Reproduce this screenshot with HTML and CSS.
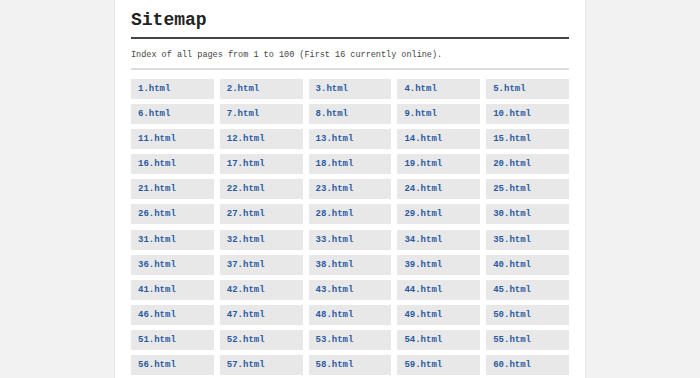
FILE: index.html
```html
<!DOCTYPE html>
<html>
<head>
    <title>Sitemap</title>
    <link rel="stylesheet" href="styles.css">
</head>
<body>
    <div class="page">
        <h1>Sitemap</h1>
        <p class="intro">Index of all pages from 1 to 100 (First 16 currently online).</p>
        <ul class="page-list" id="pageList"></ul>
    </div>

    <script>
        const pageList = document.getElementById("pageList");

        for (let i = 1; i <= 100; i++) {
            const item = document.createElement("li");
            item.innerHTML = `<a href="${i}.html">${i}.html</a>`;
            pageList.appendChild(item);
        }
    </script>
</body>
</html>
```

FILE: styles.css
```css
body {
    font-family: "Liberation Mono", "Courier New", monospace;
    margin: 0;
    padding: 0;
    background-color: #f2f2f2;
    color: #333;
}

.page {
    width: 438px;
    margin: 0 auto;
    padding: 10px 16px 20px;
    background-color: #fff;
    border-left: 1px solid #e6e6e6;
    border-right: 1px solid #e6e6e6;
}

    .page h1 {
        margin: 0;
        padding: 0 0 7px;
        font-size: 18px;
        line-height: 20px;
        color: #222;
        border-bottom: 2px solid #444;
    }

.intro {
    margin: 0;
    padding: 11px 0 8px;
    font-size: 8.5px;
    line-height: 10px;
    color: #444;
    border-bottom: 2px solid #ddd;
}

.page-list {
    list-style: none;
    margin: 9px 0 0;
    padding: 0;
    display: grid;
    grid-template-columns: repeat(5, 1fr);
    gap: 5.1px 6px;
}

    .page-list li {
        background-color: #e8e8e8;
        height: 20px;
    }

    .page-list a {
        display: block;
        padding: 0 7px;
        font-size: 9px;
        line-height: 20px;
        font-weight: bold;
        color: #2a5aa2;
        text-decoration: none;
    }
```
